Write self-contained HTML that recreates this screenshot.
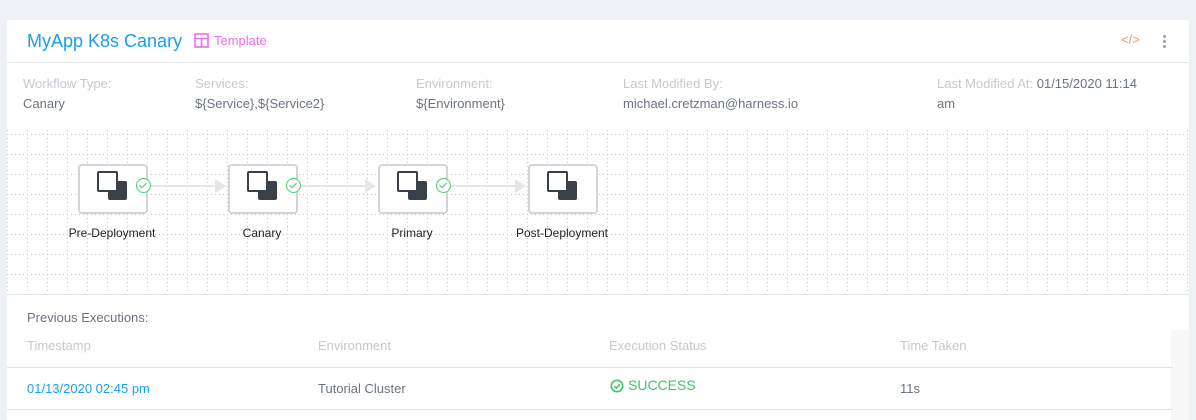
<!DOCTYPE html>
<html><head><style>
body{margin:0;width:1196px;height:412px;background:#eef1f5;font-family:"Liberation Sans",sans-serif;position:relative;overflow:hidden}
.card{position:absolute;left:7px;top:20px;width:1182px;height:400px;background:#fff}
.abs{position:absolute;white-space:nowrap}
.lbl{color:#c4c9d1;font-size:13px}
.val{color:#6b7480;font-size:13px}
.node{position:absolute;top:144px;width:66px;height:46px;border:2px solid #d1d4d8;border-radius:4px;background:#fff}
.node .b{position:absolute;left:28px;top:15px;width:19px;height:19px;background:#3a4047;border-radius:2px}
.node .a{position:absolute;left:17px;top:5px;width:17px;height:17px;border:2px solid #3a4047;border-radius:2px;background:#fff}
.ck{position:absolute;top:158px;width:13px;height:13px;border:1.5px solid #4cc56b;border-radius:50%;background:#fff}
.ck:after{content:"";position:absolute;left:4px;top:1.5px;width:3px;height:6px;border:solid #4cc56b;border-width:0 1.5px 1.5px 0;transform:rotate(45deg)}
.line{position:absolute;top:165px;height:2px;background:#e3e5e8}
.arr{position:absolute;top:159px;width:0;height:0;border-left:11px solid #e3e5e8;border-top:7px solid transparent;border-bottom:7px solid transparent}
.nl{position:absolute;top:206px;font-size:12px;color:#222;width:140px;text-align:center}
</style></head><body>
<div class="card">
<div class="abs" style="left:20px;top:11px;font-size:18px;color:#1a9fea">MyApp K8s Canary</div>
<svg class="abs" style="left:187px;top:13px" width="15" height="15"><rect x="1" y="1" width="13" height="13" fill="none" stroke="#f06ce6" stroke-width="1.6"/><line x1="1" y1="5.5" x2="14" y2="5.5" stroke="#f06ce6" stroke-width="1.6"/><line x1="7.5" y1="5.5" x2="7.5" y2="14" stroke="#f06ce6" stroke-width="1.6"/></svg>
<div class="abs" style="left:207px;top:13px;font-size:13px;color:#f06ce6">Template</div>
<div class="abs" style="left:1114px;top:12px;font-size:13px;color:#f7965a">&lt;/&gt;</div>
<div class="abs" style="left:1156px;top:15px;width:3px;height:3px;background:#9aa1a9;border-radius:50%;box-shadow:0 5px 0 #9aa1a9,0 10px 0 #9aa1a9"></div>
<div class="abs" style="left:0;top:42px;width:1182px;height:1px;background:#e4e7ea"></div>
<div class="abs lbl" style="left:16px;top:56px">Workflow Type:</div>
<div class="abs val" style="left:16px;top:76px">Canary</div>
<div class="abs lbl" style="left:188px;top:56px">Services:</div>
<div class="abs val" style="left:188px;top:76px">${Service},${Service2}</div>
<div class="abs lbl" style="left:409px;top:56px">Environment:</div>
<div class="abs val" style="left:409px;top:76px">${Environment}</div>
<div class="abs lbl" style="left:616px;top:56px">Last Modified By:</div>
<div class="abs val" style="left:616px;top:76px">michael.cretzman@harness.io</div>
<div class="abs lbl" style="left:930px;top:56px">Last Modified At: <span style="color:#6b7480">01/15/2020 11:14</span></div>
<div class="abs val" style="left:930px;top:76px">am</div>
<svg class="abs" style="left:0;top:110px" width="1182" height="164">
<defs><pattern id="g" x="0" y="4" width="20" height="20" patternUnits="userSpaceOnUse">
<rect x="0" y="0" width="1" height="1" fill="#93d2de"/><rect x="4" y="0" width="1" height="1" fill="#93d2de"/><rect x="8" y="0" width="1" height="1" fill="#93d2de"/><rect x="12" y="0" width="1" height="1" fill="#93d2de"/><rect x="16" y="0" width="1" height="1" fill="#93d2de"/>
<rect x="0" y="4" width="1" height="1" fill="#93d2de"/><rect x="0" y="8" width="1" height="1" fill="#93d2de"/><rect x="0" y="12" width="1" height="1" fill="#93d2de"/><rect x="0" y="16" width="1" height="1" fill="#93d2de"/>
</pattern></defs><rect width="1182" height="164" fill="url(#g)"/></svg>
<div class="abs" style="left:0;top:274px;width:1182px;height:1px;background:#e4e7ea"></div>

<div class="line" style="left:140px;width:72px"></div><div class="arr" style="left:208px"></div>
<div class="line" style="left:290px;width:72px"></div><div class="arr" style="left:358px"></div>
<div class="line" style="left:440px;width:72px"></div><div class="arr" style="left:508px"></div>
<div class="node" style="left:71px"><div class="b"></div><div class="a"></div></div>
<div class="node" style="left:221px"><div class="b"></div><div class="a"></div></div>
<div class="node" style="left:371px"><div class="b"></div><div class="a"></div></div>
<div class="node" style="left:521px"><div class="b"></div><div class="a"></div></div>
<div class="ck" style="left:129px"></div><div class="ck" style="left:279px"></div><div class="ck" style="left:429px"></div>
<div class="nl" style="left:35px">Pre-Deployment</div>
<div class="nl" style="left:185px">Canary</div>
<div class="nl" style="left:335px">Primary</div>
<div class="nl" style="left:485px">Post-Deployment</div>

<div class="abs val" style="left:20px;top:290px">Previous Executions:</div>
<div class="abs lbl" style="left:20px;top:318px">Timestamp</div>
<div class="abs lbl" style="left:311px;top:318px">Environment</div>
<div class="abs lbl" style="left:602px;top:318px">Execution Status</div>
<div class="abs lbl" style="left:893px;top:318px">Time Taken</div>
<div class="abs" style="left:1164px;top:310px;width:18px;height:90px;background:#f7f7f8"></div>
<div class="abs" style="left:0;top:347px;width:1166px;height:1px;background:#e1e4e7"></div>
<div class="abs" style="left:20px;top:361px;font-size:13px;color:#1a9fea">01/13/2020 02:45 pm</div>
<div class="abs val" style="left:311px;top:361px">Tutorial Cluster</div>
<svg class="abs" style="left:603px;top:359px" width="14" height="14"><circle cx="7" cy="7" r="5.7" fill="none" stroke="#3fc46a" stroke-width="1.6"/><path d="M4.3 7.2 L6.3 9.1 L9.8 5.2" fill="none" stroke="#3fc46a" stroke-width="1.6"/></svg>
<div class="abs" style="left:621px;top:357px;font-size:14px;color:#3fc46a">SUCCESS</div>
<div class="abs val" style="left:893px;top:361px">11s</div>
<div class="abs" style="left:0;top:389px;width:1166px;height:1px;background:#e1e4e7"></div>
</div>
</body></html>
